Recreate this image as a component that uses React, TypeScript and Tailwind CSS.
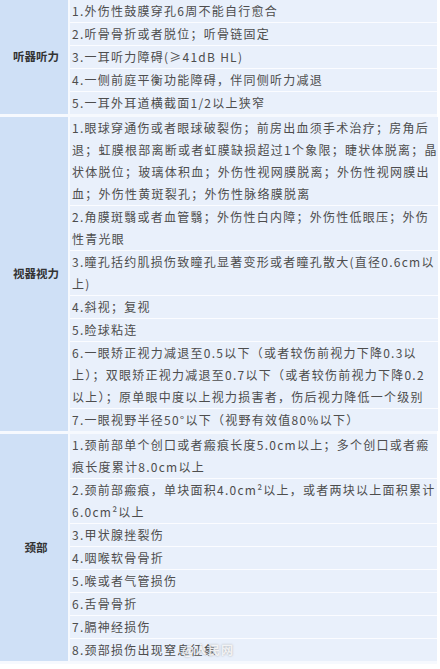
import React from 'react';

type Section = {label: string; rows: string[][]};

const sections: Section[] = [
  {
    label: '听器听力',
    rows: [
      ['1.外伤性鼓膜穿孔6周不能自行愈合'],
      ['2.听骨骨折或者脱位；听骨链固定'],
      ['3.一耳听力障碍(≥41dB HL)'],
      ['4.一侧前庭平衡功能障碍，伴同侧听力减退'],
      ['5.一耳外耳道横截面1/2以上狭窄'],
    ],
  },
  {
    label: '视器视力',
    rows: [
      [
        '1.眼球穿通伤或者眼球破裂伤；前房出血须手术治疗；房角后',
        '退；虹膜根部离断或者虹膜缺损超过1个象限；睫状体脱离；晶',
        '状体脱位；玻璃体积血；外伤性视网膜脱离；外伤性视网膜出',
        '血；外伤性黄斑裂孔；外伤性脉络膜脱离',
      ],
      ['2.角膜斑翳或者血管翳；外伤性白内障；外伤性低眼压；外伤', '性青光眼'],
      ['3.瞳孔括约肌损伤致瞳孔显著变形或者瞳孔散大(直径0.6cm以', '上)'],
      ['4.斜视；复视'],
      ['5.睑球粘连'],
      [
        '6.一眼矫正视力减退至0.5以下（或者较伤前视力下降0.3以',
        '上）；双眼矫正视力减退至0.7以下（或者较伤前视力下降0.2',
        '以上）；原单眼中度以上视力损害者，伤后视力降低一个级别',
      ],
      ['7.一眼视野半径50°以下（视野有效值80%以下）'],
    ],
  },
  {
    label: '颈部',
    rows: [
      ['1.颈前部单个创口或者瘢痕长度5.0cm以上；多个创口或者瘢', '痕长度累计8.0cm以上'],
      ['2.颈前部瘢痕，单块面积4.0cm²以上，或者两块以上面积累计', '6.0cm²以上'],
      ['3.甲状腺挫裂伤'],
      ['4.咽喉软骨骨折'],
      ['5.喉或者气管损伤'],
      ['6.舌骨骨折'],
      ['7.膈神经损伤'],
      ['8.颈部损伤出现窒息征象'],
    ],
  },
];

export default function App() {
  return (
    <div
      className="w-[440px] h-[669px] overflow-hidden bg-white pr-[3px]"
      style={{fontFamily: '"Noto Sans CJK SC", "Noto Sans", sans-serif'}}
    >
      {sections.map((section, si) => (
        <div key={si} className="flex border-b-[3px] border-[#f6f9fe]">
          <div className="w-[70px] shrink-0 bg-[#cfe0f6] border-r-2 border-[#f6f9fe] flex items-center justify-center pl-[4px]">
            <span className="text-[11.5px] font-bold text-[#333]">{section.label}</span>
          </div>
          <div className="flex-1 flex flex-col">
            {section.rows.map((lines, ri) => (
              <div
                key={ri}
                className={
                  'relative bg-[#e9f0fb] pl-[2px] ' +
                  (ri < section.rows.length - 1 ? 'border-b border-[#fbfcff]' : '')
                }
              >
                {lines.map((line, li) => (
                  <div
                    key={li}
                    className="whitespace-nowrap text-[12px] leading-[22px] tracking-[1.25px] text-[#4d4d4d]"
                  >
                    {line}
                  </div>
                ))}
                {si === 2 && ri === section.rows.length - 1 && (
                  <span className="absolute left-[112px] top-[2px] text-[12px] leading-[18px] tracking-[1px] text-white/80 font-bold [text-shadow:0_0_2px_rgba(120,120,120,0.6)]">
                    @人民网
                  </span>
                )}
              </div>
            ))}
          </div>
        </div>
      ))}
    </div>
  );
}
